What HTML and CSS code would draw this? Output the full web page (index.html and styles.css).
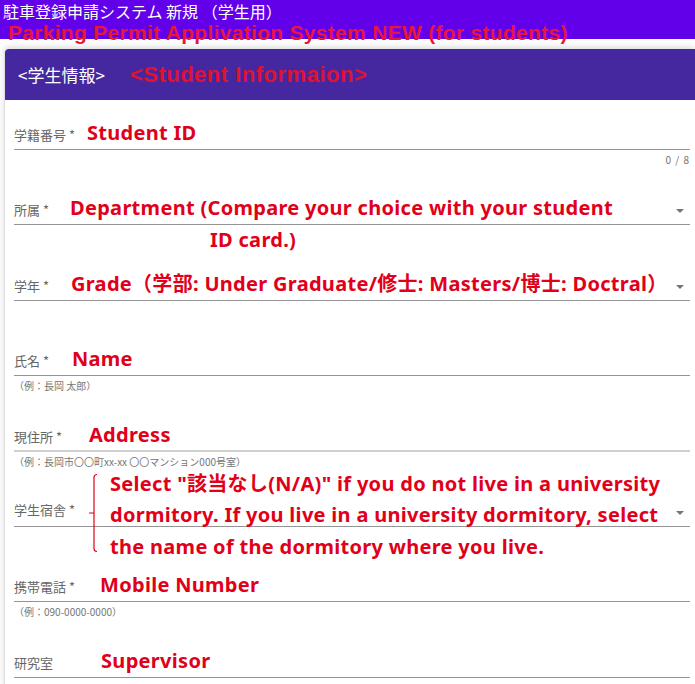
FILE: index.html
```html
<!DOCTYPE html>
<html>
<head lang="ja">
    <meta charset="UTF-8">
    <title>駐車登録申請システム 新規（学生用）</title>
    <link rel="stylesheet" href="styles.css">
</head>
<body>
<div class="app-header">
    <div class="app-title">駐車登録申請システム 新規 （学生用）</div>
    <div class="app-title-en">Parking Permit Applivation System NEW (for students)</div>
</div>

<div class="card">
    <div class="card-title">
        <span class="card-title-ja">&lt;学生情報&gt;</span>
        <span class="card-title-en">&lt;Student Informaion&gt;</span>
    </div>

    <div class="form-body">
        <div class="field">
            <div class="row">
                <label>学籍番号 *</label>
                <span class="note note-id">Student ID</span>
            </div>
            <div class="hint hint-count">0 / 8</div>
        </div>

        <div class="field">
            <div class="row">
                <label>所属 *</label>
                <span class="note note-dept">Department (Compare your choice with your student<br><span class="note-indent">ID card.)</span></span>
                <span class="arrow"></span>
            </div>
            <div class="hint"></div>
        </div>

        <div class="field">
            <div class="row">
                <label>学年 *</label>
                <span class="note note-grade">Grade（学部: Under Graduate/修士: Masters/博士: Doctral）</span>
                <span class="arrow"></span>
            </div>
            <div class="hint"></div>
        </div>

        <div class="field">
            <div class="row">
                <label>氏名 *</label>
                <span class="note note-name">Name</span>
            </div>
            <div class="hint">（例：長岡 太郎）</div>
        </div>

        <div class="field">
            <div class="row row-light">
                <label>現住所 *</label>
                <span class="note note-addr">Address</span>
            </div>
            <div class="hint">（例：長岡市〇〇町xx-xx 〇〇マンション000号室）</div>
        </div>

        <div class="field">
            <div class="row">
                <label>学生宿舎 *</label>
                <svg class="brace" width="14" height="80" viewBox="0 0 14 80">
                    <path d="M12 1.5 Q9 1.5 9 4.5 L9 75.5 Q9 78.5 12 78.5 M9 40 L4 40" fill="none" stroke="#e1001a" stroke-width="1.2"/>
                </svg>
                <span class="note note-dorm">Select "該当なし(N/A)" if you do not live in a university<br>dormitory. If you live in a university dormitory, select<br>the name of the dormitory where you live.</span>
                <span class="arrow"></span>
            </div>
            <div class="hint"></div>
        </div>

        <div class="field">
            <div class="row">
                <label>携帯電話 *</label>
                <span class="note note-tel">Mobile Number</span>
            </div>
            <div class="hint">（例：090-0000-0000）</div>
        </div>

        <div class="field">
            <div class="row">
                <label>研究室</label>
                <span class="note note-lab">Supervisor</span>
            </div>
            <div class="hint"></div>
        </div>
    </div>
</div>
</body>
</html>
```

FILE: styles.css
```css
html, body {
    margin: 0;
    padding: 0;
}
body {
    background: #ffffff;
    font-family: "Noto Sans CJK JP", "Noto Sans", sans-serif;
    overflow: hidden;
}

.app-header {
    height: 39px;
    background: #6200ea;
    padding-left: 3px;
    position: relative;
    z-index: 2;
}
.app-title {
    color: #ffffff;
    font-size: 16px;
    line-height: 22px;
    height: 22px;
}
.app-title-en {
    color: #e8173a;
    font-family: "Liberation Sans", "Noto Sans", sans-serif;
    font-weight: bold;
    font-size: 21px;
    letter-spacing: 0.3px;
    line-height: 22px;
    padding-left: 5px;
    white-space: nowrap;
}

.card {
    margin: 10px 0 0 4px;
    border-left: 1px solid #e0e0e0;
    border-top-left-radius: 4px;
    box-shadow: 0 -2px 6px rgba(0, 0, 0, 0.15);
    background: #ffffff;
    height: 640px;
}
.card-title {
    height: 51px;
    background: #4527a0;
    border-top-left-radius: 4px;
    display: flex;
    align-items: center;
    padding-left: 13px;
}
.card-title-ja {
    color: #ffffff;
    font-size: 17px;
}
.card-title-en {
    color: #e0122f;
    font-family: "Liberation Sans", "Noto Sans", sans-serif;
    font-weight: bold;
    font-size: 22px;
    letter-spacing: 0.5px;
    margin-left: 25px;
}

.form-body {
    padding: 17px 5px 0 9px;
}
.field {
    margin-bottom: 25.4px;
}
.row {
    height: 32px;
    display: flex;
    align-items: baseline;
    border-bottom: 1px solid #949494;
    position: relative;
}
.row-light {
    border-bottom: 2px solid #d0d0d0;
    height: 31px;
}
.row label {
    font-size: 13px;
    line-height: 32px;
    color: #666666;
    white-space: nowrap;
}

.note {
    color: #e1001a;
    font-family: "Noto Sans", "Noto Sans CJK JP", sans-serif;
    font-weight: bold;
    font-size: 20px;
    letter-spacing: 0.3px;
    line-height: 32px;
    white-space: nowrap;
}
.note-indent {
    padding-left: 140px;
}
.note-id { margin-left: 12px; }
.note-dept { margin-left: 21px; }
.note-grade { margin-left: 22px; }
.note-name { margin-left: 23px; }
.note-addr { margin-left: 27px; }
.note-dorm {
    margin-left: 11px;
    align-self: center;
    margin-top: 10px;
    line-height: 31.5px;
}
.note-tel { margin-left: 25px; }
.note-lab { margin-left: 48px; }

.brace {
    align-self: center;
    margin-top: 7px;
    margin-left: 10px;
    flex-shrink: 0;
}

.arrow {
    margin-left: auto;
    margin-right: 6px;
    align-self: flex-end;
    margin-bottom: 11px;
    width: 0;
    height: 0;
    border-left: 4px solid transparent;
    border-right: 4px solid transparent;
    border-top: 4px solid #757575;
}

.hint {
    height: 14px;
    padding-top: 3px;
    font-size: 10px;
    line-height: 14px;
    color: #757575;
}
.hint-count {
    text-align: right;
    letter-spacing: 1px;
}
```
